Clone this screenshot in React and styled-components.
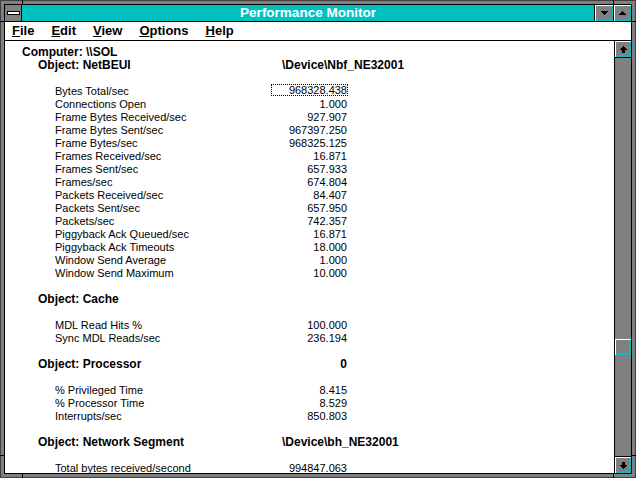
import React from "react";
import styled, { createGlobalStyle } from "styled-components";

const Global = createGlobalStyle`
  html, body { margin: 0; padding: 0; background: #fff; }
  body { font-family: "Liberation Sans", Arial, sans-serif; }
`;

const FRAME = "#808080";
const OUTER = "#404040";
const CYAN = "#00c0c0";

const Frame = styled.div`
  position: relative;
  width: 636px;
  height: 478px;
  box-sizing: border-box;
  background: ${FRAME};
  border: 1px solid ${OUTER};
  padding: 3px;
`;

const Notch = styled.span`
  position: absolute;
  background: #000;
  width: ${(p) => (p.$vertical ? "1px" : "5px")};
  height: ${(p) => (p.$vertical ? "5px" : "1px")};
`;

const Inner = styled.div`
  height: 100%;
  box-sizing: border-box;
  border: 1px solid #000;
  display: flex;
  flex-direction: column;
`;

const TitleBar = styled.div`
  flex: none;
  height: 16px;
  display: flex;
  border-bottom: 1px solid #000;
`;

const SysMenu = styled.div`
  width: 16px;
  background: ${FRAME};
  border-right: 1px solid #000;
  display: flex;
  align-items: center;
  justify-content: center;
`;

const SysBar = styled.div`
  width: 13px;
  height: 4px;
  box-sizing: border-box;
  border: 1px solid #000;
  background: #fff;
`;

const Caption = styled.div`
  flex: 1;
  background: ${CYAN};
  color: #fff;
  font-weight: 700;
  font-size: 13.5px;
  line-height: 16px;
  text-align: center;
  white-space: nowrap;
`;

const CaptionButton = styled.div`
  width: ${(p) => p.$w}px;
  background: ${FRAME};
  border-left: 1px solid #000;
  box-shadow: inset 1px 1px #fff, inset -1px -1px ${CYAN};
  display: flex;
  align-items: center;
  justify-content: center;
`;

const MenuBar = styled.div`
  flex: none;
  height: 18px;
  background: #fff;
  border-bottom: 1px solid #000;
  display: flex;
  align-items: center;
  gap: 17px;
  padding-left: 7px;
  font-size: 13px;
  font-weight: 700;
  line-height: 18px;
  color: #000;
`;

const MenuItem = styled.span`
  white-space: nowrap;
`;

const Accel = styled.span`
  text-decoration: underline;
  text-underline-offset: 1px;
`;

const Client = styled.div`
  flex: 1;
  min-height: 0;
  display: flex;
`;

const Content = styled.div`
  flex: 1;
  background: #fff;
  border-right: 1px solid #000;
  padding-top: 5px;
  overflow: hidden;
  color: #000;
`;

const Line = styled.div`
  display: grid;
  grid-template-columns: 266px 77px;
  height: 13px;
  line-height: 13px;
  white-space: nowrap;
  font-size: ${(p) => (p.$bold ? "12px" : "11px")};
  font-weight: ${(p) => (p.$bold ? 700 : 400)};
`;

const Label = styled.span`
  padding-left: ${(p) => p.$indent}px;
`;

const Value = styled.span`
  display: block;
  text-align: ${(p) => p.$align};
  padding-left: ${(p) => (p.$align === "left" ? 11 : 0)}px;
  padding-right: 1px;
  overflow: visible;
`;

const Focused = styled(Value)`
  height: 12px;
  line-height: 13px;
  margin-top: -1px;
  outline: 1px dotted #000;
  outline-offset: -1px;
`;

const ScrollBar = styled.div`
  width: 16px;
  display: flex;
  flex-direction: column;
  background: ${FRAME};
`;

const ScrollButton = styled.div`
  flex: none;
  height: 16px;
  background: ${FRAME};
  box-shadow: inset 1px 1px #fff, inset -1px -1px ${CYAN}, inset -2px -2px ${CYAN};
  display: flex;
  align-items: center;
  justify-content: center;
  ${(p) => (p.$top ? "border-bottom: 1px solid #000;" : "border-top: 1px solid #000;")}
`;

const Track = styled.div`
  flex: 1;
  display: flex;
  flex-direction: column;
`;

const Thumb = styled.div`
  flex: none;
  height: 16px;
  background: ${FRAME};
  box-shadow: inset 1px 1px #fff, inset -1px -1px ${CYAN}, inset -2px -2px ${CYAN};
`;

const Tri = ({ up }) => (
  <svg width="7" height="4" viewBox="0 0 7 4" shapeRendering="crispEdges">
    <polygon points={up ? "3.5,0 7,4 0,4" : "0,0 7,0 3.5,4"} fill="#000" />
  </svg>
);

const Arrow = ({ up }) => (
  <svg width="7" height="7" viewBox="0 0 7 7" shapeRendering="crispEdges">
    <polygon
      points={up ? "3.5,0 7,4 5,4 5,7 2,7 2,4 0,4" : "2,0 5,0 5,3 7,3 3.5,7 0,3 2,3"}
      fill="#000"
    />
  </svg>
);

const rows = [
  { t: "h", label: "Computer: \\\\SOL", indent: 17 },
  { t: "h", label: "Object: NetBEUI", indent: 33, inst: "\\Device\\Nbf_NE32001" },
  { t: "b" },
  { t: "c", label: "Bytes Total/sec", value: "968328.438", focus: true },
  { t: "c", label: "Connections Open", value: "1.000" },
  { t: "c", label: "Frame Bytes Received/sec", value: "927.907" },
  { t: "c", label: "Frame Bytes Sent/sec", value: "967397.250" },
  { t: "c", label: "Frame Bytes/sec", value: "968325.125" },
  { t: "c", label: "Frames Received/sec", value: "16.871" },
  { t: "c", label: "Frames Sent/sec", value: "657.933" },
  { t: "c", label: "Frames/sec", value: "674.804" },
  { t: "c", label: "Packets Received/sec", value: "84.407" },
  { t: "c", label: "Packets Sent/sec", value: "657.950" },
  { t: "c", label: "Packets/sec", value: "742.357" },
  { t: "c", label: "Piggyback Ack Queued/sec", value: "16.871" },
  { t: "c", label: "Piggyback Ack Timeouts", value: "18.000" },
  { t: "c", label: "Window Send Average", value: "1.000" },
  { t: "c", label: "Window Send Maximum", value: "10.000" },
  { t: "b" },
  { t: "h", label: "Object: Cache", indent: 33 },
  { t: "b" },
  { t: "c", label: "MDL Read Hits %", value: "100.000" },
  { t: "c", label: "Sync MDL Reads/sec", value: "236.194" },
  { t: "b" },
  { t: "h", label: "Object: Processor", indent: 33, inst: "0", instRight: true },
  { t: "b" },
  { t: "c", label: "% Privileged Time", value: "8.415" },
  { t: "c", label: "% Processor Time", value: "8.529" },
  { t: "c", label: "Interrupts/sec", value: "850.803" },
  { t: "b" },
  { t: "h", label: "Object: Network Segment", indent: 33, inst: "\\Device\\bh_NE32001" },
  { t: "b" },
  { t: "c", label: "Total bytes received/second", value: "994847.063" },
];

const menus = ["File", "Edit", "View", "Options", "Help"];

export default function App() {
  return (
    <>
      <Global />
      <Frame>
        <Notch $vertical style={{ left: 21, top: -1 }} />
        <Notch $vertical style={{ left: 612, top: -1 }} />
        <Notch $vertical style={{ left: 21, bottom: -1 }} />
        <Notch $vertical style={{ left: 612, bottom: -1 }} />
        <Notch style={{ top: 20, left: -1 }} />
        <Notch style={{ top: 454, left: -1 }} />
        <Notch style={{ top: 20, right: -1 }} />
        <Notch style={{ top: 454, right: -1 }} />
        <Inner>
          <TitleBar>
            <SysMenu>
              <SysBar />
            </SysMenu>
            <Caption>Performance Monitor</Caption>
            <CaptionButton $w={18}>
              <Tri />
            </CaptionButton>
            <CaptionButton $w={17}>
              <Tri up />
            </CaptionButton>
          </TitleBar>
          <MenuBar>
            {menus.map((m) => (
              <MenuItem key={m}>
                <Accel>{m[0]}</Accel>
                {m.slice(1)}
              </MenuItem>
            ))}
          </MenuBar>
          <Client>
            <Content>
              {rows.map((r, i) => {
                if (r.t === "b") return <Line key={i} />;
                if (r.t === "h")
                  return (
                    <Line key={i} $bold>
                      <Label $indent={r.indent}>{r.label}</Label>
                      {r.inst && <Value $align={r.instRight ? "right" : "left"}>{r.inst}</Value>}
                    </Line>
                  );
                const V = r.focus ? Focused : Value;
                return (
                  <Line key={i}>
                    <Label $indent={50}>{r.label}</Label>
                    <V $align="right">{r.value}</V>
                  </Line>
                );
              })}
            </Content>
            <ScrollBar>
              <ScrollButton $top>
                <Arrow up />
              </ScrollButton>
              <Track>
                <Thumb style={{ marginTop: 281 }} />
              </Track>
              <ScrollButton>
                <Arrow />
              </ScrollButton>
            </ScrollBar>
          </Client>
        </Inner>
      </Frame>
    </>
  );
}
